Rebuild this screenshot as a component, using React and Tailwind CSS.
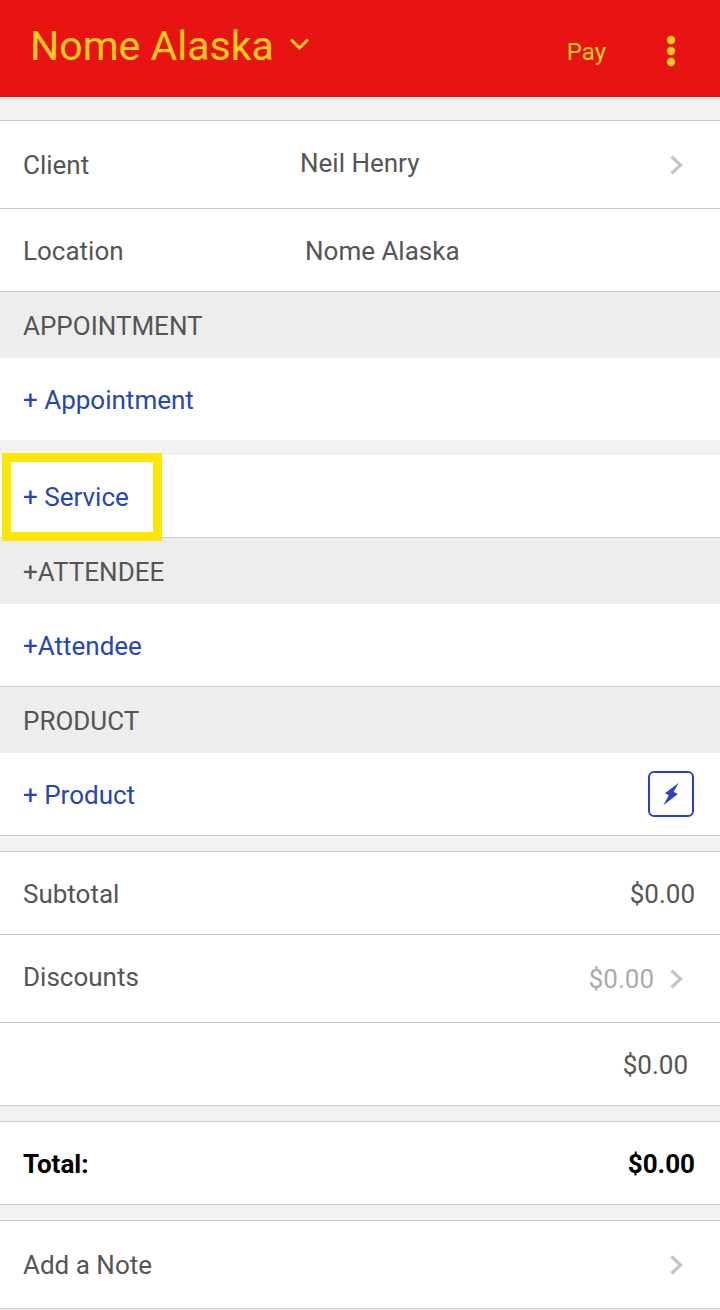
function ChevronRight() {
  return (
    <svg className="h-5 w-4 shrink-0" viewBox="0 0 16 20" fill="none" aria-hidden="true">
      <path d="M3.5 1.5 L12.5 10 L3.5 18.5" stroke="#c6c6c6" strokeWidth="3.4" />
    </svg>
  );
}

function Row({ children, tall = false, border = true }) {
  return (
    <div
      className={`flex items-center bg-white pl-[23px] ${tall ? "min-h-[88px]" : border ? "min-h-[83px]" : "min-h-[82px]"} ${border ? "border-b border-[#c9c9c9]" : ""}`}
    >
      {children}
    </div>
  );
}

function SectionTitle({ children }) {
  return (
    <h2 className="flex min-h-[66px] items-center bg-[#ededed] pl-[23px] pt-[2px]">
      {children}
    </h2>
  );
}

function AddButton({ children }) {
  return (
    <button type="button" className="pt-[2px] text-[#2545b8]">
      {children}
    </button>
  );
}

function Gap() {
  return <div className="h-4 border-b border-[#c9c9c9]" />;
}

export default function App() {
  return (
    <div className="min-h-screen w-full bg-[#f2f2f2] font-['Roboto',sans-serif] text-[26px] leading-8 text-[#555]">
      <header className="flex h-[97px] items-center bg-[#e81414] pl-[30px] pr-10 text-[#facc1e]">
        <h1 className="flex-1 pb-1.5">
          <button type="button" className="flex items-center gap-4 text-[41px] leading-[48px]">
            Nome Alaska
            <svg className="h-4 w-5 pb-1" viewBox="0 0 20 12" fill="none" aria-hidden="true">
              <path d="M1 1.5 L9.5 10 L18 1.5" stroke="currentColor" strokeWidth="3" />
            </svg>
          </button>
        </h1>
        <button type="button" className="mr-14 pt-1.5 text-[24px] leading-7">
          Pay
        </button>
        <button type="button" aria-label="More options" className="flex w-[18px] justify-center pt-1">
          <svg className="h-8 w-3" viewBox="0 0 12 32" fill="currentColor" aria-hidden="true">
            <circle cx="6" cy="5" r="4.2" />
            <circle cx="6" cy="16" r="4.2" />
            <circle cx="6" cy="27" r="4.2" />
          </svg>
        </button>
      </header>

      <main>
        <div className="h-6 border-b border-[#c9c9c9]" />
        <Row tall>
          <button type="button" className="flex flex-1 items-center pr-9 text-left">
            <span className="w-[277px] shrink-0">Client</span>
            <span className="flex-1 pb-1">Neil Henry</span>
            <ChevronRight />
          </button>
        </Row>
        <Row>
          <span className="w-[282px] shrink-0 pt-[2px]">Location</span>
          <span className="pt-[2px]">Nome Alaska</span>
        </Row>

        <SectionTitle>APPOINTMENT</SectionTitle>
        <Row border={false}>
          <AddButton>+ Appointment</AddButton>
        </Row>
        <div className="h-[15px]" />
        <div className="relative">
          <Row>
            <AddButton>+ Service</AddButton>
          </Row>
          <span
            aria-hidden="true"
            className="pointer-events-none absolute -top-[2px] left-[2px] z-10 h-[88px] w-40 border-[9px] border-[#ffe600]"
          />
        </div>

        <SectionTitle>+ATTENDEE</SectionTitle>
        <Row>
          <AddButton>+Attendee</AddButton>
        </Row>

        <SectionTitle>PRODUCT</SectionTitle>
        <Row>
          <AddButton>+ Product</AddButton>
          <button
            type="button"
            aria-label="Quick add product"
            className="ml-auto mr-[26px] flex size-[46px] items-center justify-center rounded-md border-2 border-[#2b41c0] text-[#2b41c0]"
          >
            <svg className="h-6 w-4" viewBox="0 0 16 24" fill="currentColor" aria-hidden="true">
              <path d="M15.8 0.8 L2 11.2 L5.8 13.2 L0.4 23.2 L14.8 12 L10.6 9.8 Z" />
            </svg>
          </button>
        </Row>

        <Gap />
        <Row>
          <span className="pt-[2px]">Subtotal</span>
          <span className="ml-auto pr-[25px] pt-[2px]">$0.00</span>
        </Row>
        <Row tall>
          <button type="button" className="flex flex-1 items-center pr-9 text-left">
            <span className="flex-1 pb-1">Discounts</span>
            <span className="pr-3.5 text-[#aaa]">$0.00</span>
            <ChevronRight />
          </button>
        </Row>
        <Row>
          <span className="ml-auto pr-8 pt-[2px]">$0.00</span>
        </Row>

        <Gap />
        <Row>
          <strong className="flex flex-1 justify-between pr-[25px] pt-[2px] font-bold text-black">
            <span>Total:</span>
            <span>$0.00</span>
          </strong>
        </Row>

        <Gap />
        <Row tall>
          <button type="button" className="flex flex-1 items-center justify-between pr-9 text-left">
            <span>Add a Note</span>
            <ChevronRight />
          </button>
        </Row>
      </main>
    </div>
  );
}
